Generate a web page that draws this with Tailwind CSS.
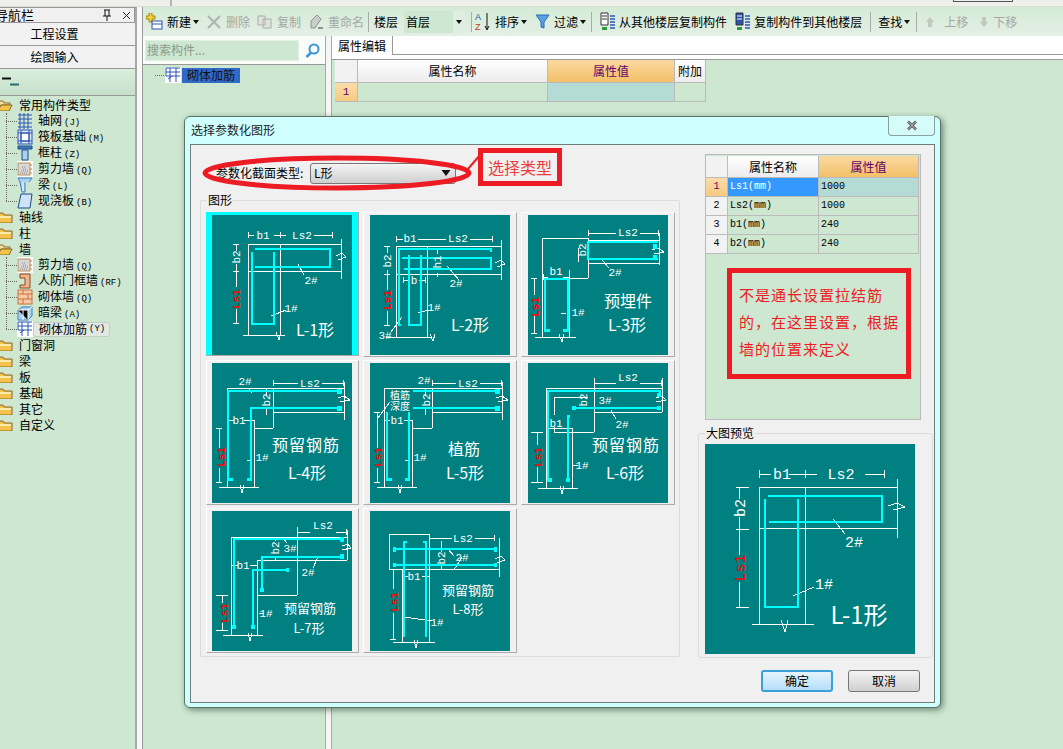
<!doctype html>
<html lang="zh"><head><meta charset="utf-8"><script src="https://cdn.jsdelivr.net/npm/@tailwindcss/browser@4"></script></head>
<body class="bg-[#cde7d0]">
<svg width="0" height="0" class="absolute">
<defs>
<symbol id="fo" viewBox="0 0 16 12"><path d="M1 2h5l1 2h8v8H1z" fill="#f3c34e" stroke="#8a6a20"/><path d="M2 5h12v2H2z" fill="#fbe9a6"/></symbol>
<symbol id="fopen" viewBox="0 0 16 12"><path d="M1 2h5l1 2h6v2H4l-3 6z" fill="#f6e3a4" stroke="#8a6a20"/><path d="M1 12l3-6h11l-3 6z" fill="#f3c34e" stroke="#8a6a20"/></symbol>
<symbol id="wall" viewBox="0 0 16 16"><rect width="16" height="16" fill="#fff"/><rect x="1" y="2" width="12" height="12" fill="#d8d8d8" stroke="#b98a60"/><path d="M3 12h8M4 10h7M6 8h4M5 6h3" stroke="#888" stroke-dasharray="1 1"/><path d="M14 3v11" stroke="#e07a20" stroke-dasharray="2 2"/></symbol>
<symbol id="rebar" viewBox="0 0 16 16"><rect width="16" height="16" fill="#fff"/><path d="M1 1h14M1 1v8h14M5 1v14M11 1v14M1 5h14M3 12l4-3" fill="none" stroke="#2b55b5"/></symbol>
<symbol id="caret" viewBox="0 0 6 4"><path d="M0 0h6L3 4z" fill="#111"/></symbol>
</defs>
</svg>
<div class="relative w-[1063px] h-[749px] overflow-hidden flex flex-col bg-[#cde7d0] text-black text-[12px] leading-4 font-['Noto_Sans_CJK_SC','Liberation_Sans',sans-serif]">
  <div class="h-[7px] bg-[#efefec] border-b border-[#dcdcd8] flex shrink-0">
    <div class="w-[172px] h-[6px] border-r-2 border-[#b5b5b5]"></div>
    <div class="ml-[781px] w-[60px] h-[2px] border-x border-b border-[#555]"></div>
  </div>
  <div class="flex flex-1 min-h-0">
    <!-- left nav -->
    <div class="w-[137px] shrink-0 flex flex-col border-r-2 border-[#a8a8a8] bg-[#cde7d0]">
      <div class="h-[16px] bg-[#f0f0f0] border border-l-0 border-[#999] flex items-center overflow-hidden">
        <span class="-ml-[5px] text-[13px]">导航栏</span>
        <svg class="ml-auto shrink-0" width="12" height="12" viewBox="0 0 12 12"><path d="M3 1h6M4 1v6M8 1v6M2 7h8M6 7v5" stroke="#111" fill="none"/></svg>
        <svg class="ml-[9px] mr-[3px] shrink-0" width="9" height="9" viewBox="0 0 9 9"><path d="M1 1l7 7M8 1L1 8" stroke="#222" fill="none"/></svg>
      </div>
      <div class="h-[23px] bg-[#f2f2f2] border-b border-[#999] flex items-center justify-center pr-[26px] text-[12px]">工程设置</div>
      <div class="h-[23px] bg-[#f2f2f2] border-b border-[#999] flex items-center justify-center pr-[26px] text-[12px]">绘图输入</div>
      <div class="h-[27px] bg-gradient-to-b from-[#dbeedd] to-[#c6e0ca] border-b border-[#999] relative flex items-center pl-[2px]">
        <svg width="18" height="10" viewBox="0 0 18 10"><path d="M0 1.5h9" stroke="#111" stroke-width="2"/><path d="M8 7.5h9" stroke="#1f6f70" stroke-width="2"/></svg>
      </div>
      <div class="pt-[1px] relative">
        <div class="flex items-center h-4 overflow-visible"><svg class="-ml-[3px] shrink-0" width="16" height="12"><use href="#fopen"/></svg><span class="ml-[6px]">常用构件类型</span></div>
        <div class="relative">
          <div class="absolute left-[6px] top-0 h-[88px] border-l border-dotted border-[#666]"></div>
          <div class="flex items-center h-4 pl-[6px]"><span class="w-[11px] border-t border-dotted border-[#666]"></span><svg width="16" height="16" viewBox="0 0 16 16"><path d="M1 2h14M1 6h14M1 10h14M1 14h14M3 0v16M7 0v16M11 0v16" stroke="#2b55b5" fill="none"/></svg><span class="ml-[5px]">轴网<span class="font-['Liberation_Mono'] text-[9px] ml-[2px]">(J)</span></span></div>
          <div class="flex items-center h-4 pl-[6px]"><span class="w-[11px] border-t border-dotted border-[#666]"></span><svg width="16" height="16" viewBox="0 0 16 16"><rect x="1" y="1" width="14" height="14" fill="#dfe9f5" stroke="#2b55b5"/><rect x="4" y="4" width="8" height="8" fill="#fff" stroke="#2b55b5"/><path d="M1 4h14M1 12h14M4 1v14M12 1v14" stroke="#2b55b5"/></svg><span class="ml-[5px]">筏板基础<span class="font-['Liberation_Mono'] text-[9px] ml-[2px]">(M)</span></span></div>
          <div class="flex items-center h-4 pl-[6px]"><span class="w-[11px] border-t border-dotted border-[#666]"></span><svg width="16" height="16" viewBox="0 0 16 16"><path d="M1 1h14v3H1z" fill="#3f7fc0" stroke="#1d4a8a"/><path d="M5 5h6v10H5z" fill="#a8d2ee" stroke="#1d4a8a"/></svg><span class="ml-[5px]">框柱<span class="font-['Liberation_Mono'] text-[9px] ml-[2px]">(Z)</span></span></div>
          <div class="flex items-center h-4 pl-[6px]"><span class="w-[11px] border-t border-dotted border-[#666]"></span><svg width="16" height="16"><use href="#wall"/></svg><span class="ml-[5px]">剪力墙<span class="font-['Liberation_Mono'] text-[9px] ml-[2px]">(Q)</span></span></div>
          <div class="flex items-center h-4 pl-[6px]"><span class="w-[11px] border-t border-dotted border-[#666]"></span><svg width="16" height="16" viewBox="0 0 16 16"><path d="M1 1h14l-3 4H8v10H5L3 5z" fill="#a8d2ee" stroke="#3f7fc0"/><path d="M8 5l4 0M6 5v9" stroke="#fff"/></svg><span class="ml-[5px]">梁<span class="font-['Liberation_Mono'] text-[9px] ml-[2px]">(L)</span></span></div>
          <div class="flex items-center h-4 pl-[6px]"><span class="w-[11px] border-t border-dotted border-[#666]"></span><svg width="16" height="16" viewBox="0 0 16 16"><path d="M4 1h11l-2 14H1z" fill="#cfe3f7" stroke="#1d4a8a"/></svg><span class="ml-[5px]">现浇板<span class="font-['Liberation_Mono'] text-[9px] ml-[2px]">(B)</span></span></div>
        </div>
        <div class="flex items-center h-4"><svg class="-ml-[3px] shrink-0" width="16" height="12"><use href="#fo"/></svg><span class="ml-[6px]">轴线</span></div>
        <div class="flex items-center h-4"><svg class="-ml-[3px] shrink-0" width="16" height="12"><use href="#fo"/></svg><span class="ml-[6px]">柱</span></div>
        <div class="flex items-center h-4"><svg class="-ml-[3px] shrink-0" width="16" height="12"><use href="#fopen"/></svg><span class="ml-[6px]">墙</span></div>
        <div class="relative">
          <div class="absolute left-[6px] top-0 h-[72px] border-l border-dotted border-[#666]"></div>
          <div class="flex items-center h-4 pl-[6px]"><span class="w-[11px] border-t border-dotted border-[#666]"></span><svg width="16" height="16"><use href="#wall"/></svg><span class="ml-[5px]">剪力墙<span class="font-['Liberation_Mono'] text-[9px] ml-[2px]">(Q)</span></span></div>
          <div class="flex items-center h-4 pl-[6px]"><span class="w-[11px] border-t border-dotted border-[#666]"></span><svg width="16" height="16" viewBox="0 0 16 16"><path d="M3 1h10v14H3v-3h5V5H3z" fill="#f2b48c" stroke="#8a4a20"/></svg><span class="ml-[5px]">人防门框墙<span class="font-['Liberation_Mono'] text-[9px] ml-[2px]">(RF)</span></span></div>
          <div class="flex items-center h-4 pl-[6px]"><span class="w-[11px] border-t border-dotted border-[#666]"></span><svg width="16" height="16" viewBox="0 0 16 16"><rect x="1" y="1" width="14" height="14" fill="#f8c9a6" stroke="#c8703a"/><path d="M1 5h14M1 10h14M6 1v4M11 5v5M6 10v5" stroke="#c8703a"/></svg><span class="ml-[5px]">砌体墙<span class="font-['Liberation_Mono'] text-[9px] ml-[2px]">(Q)</span></span></div>
          <div class="flex items-center h-4 pl-[6px]"><span class="w-[11px] border-t border-dotted border-[#666]"></span><svg width="16" height="16" viewBox="0 0 16 16"><path d="M1 5l4-3h10v9l-4 4H1z" fill="#a8d2ee" stroke="#3f7fc0"/><path d="M1 5h10v10M11 5l4-3M6 5v10" stroke="#fff"/></svg><span class="ml-[5px]">暗梁<span class="font-['Liberation_Mono'] text-[9px] ml-[2px]">(A)</span></span></div>
          <div class="flex items-center h-4 pl-[6px]"><span class="w-[11px] border-t border-dotted border-[#666]"></span><svg width="16" height="16"><use href="#rebar"/></svg><span class="pl-[5px] pr-[4px] h-[15px] flex items-center bg-[#e3e8e3] border border-[#c4cfc4] rounded-[3px]">砌体加筋<span class="font-['Liberation_Mono'] text-[9px] ml-[2px]">(Y)</span></span></div>
        </div>
        <div class="flex items-center h-4"><svg class="-ml-[3px] shrink-0" width="16" height="12"><use href="#fo"/></svg><span class="ml-[6px]">门窗洞</span></div>
        <div class="flex items-center h-4"><svg class="-ml-[3px] shrink-0" width="16" height="12"><use href="#fo"/></svg><span class="ml-[6px]">梁</span></div>
        <div class="flex items-center h-4"><svg class="-ml-[3px] shrink-0" width="16" height="12"><use href="#fo"/></svg><span class="ml-[6px]">板</span></div>
        <div class="flex items-center h-4"><svg class="-ml-[3px] shrink-0" width="16" height="12"><use href="#fo"/></svg><span class="ml-[6px]">基础</span></div>
        <div class="flex items-center h-4"><svg class="-ml-[3px] shrink-0" width="16" height="12"><use href="#fo"/></svg><span class="ml-[6px]">其它</span></div>
        <div class="flex items-center h-4"><svg class="-ml-[3px] shrink-0" width="16" height="12"><use href="#fo"/></svg><span class="ml-[6px]">自定义</span></div>
      </div>
    </div>
    <div class="w-[6px] shrink-0 bg-[#f8f8f8] border-r border-[#999]"></div>
    <!-- main -->
    <div class="flex-1 min-w-0 flex flex-col">
      <div class="h-[29px] shrink-0 bg-gradient-to-b from-[#d4ebd7] to-[#e4efe5] flex items-center pl-[3px] whitespace-nowrap">
        <svg class="shrink-0" width="17" height="17" viewBox="0 0 17 17"><path d="M3 0h3v3h3v3H6v3H3V6H0V3h3z" fill="#f4d23c" stroke="#a08a10"/><rect x="6" y="8" width="10" height="8" fill="#fff" stroke="#2b55b5"/><path d="M6 11h10" stroke="#2b55b5"/></svg>
        <span class="ml-[4px]">新建</span><svg class="ml-[2px] shrink-0" width="6" height="4"><use href="#caret"/></svg>
        <svg class="ml-[8px] shrink-0" width="14" height="14" viewBox="0 0 14 14"><path d="M1 1l12 12M13 1L1 13" stroke="#aeb5ae" stroke-width="2"/></svg>
        <span class="ml-[5px] text-[#a2a8a2]">删除</span>
        <svg class="ml-[7px] shrink-0" width="15" height="14" viewBox="0 0 15 14"><path d="M1 1h7v9H1zM6 4h8v9H6z" fill="#dfe4df" stroke="#a8aea8"/></svg>
        <span class="ml-[5px] text-[#a2a8a2]">复制</span>
        <svg class="ml-[9px] shrink-0" width="14" height="15" viewBox="0 0 14 15"><path d="M1 14V7l6-6 4 4-6 9z" fill="#c8cfc8" stroke="#8c948c"/><path d="M8 14h5" stroke="#8c948c" stroke-width="2"/></svg>
        <span class="ml-[4px] text-[#a2a8a2]">重命名</span>
        <span class="ml-[4px] h-[20px] border-l border-[#aaa]"></span>
        <span class="ml-[5px]">楼层</span>
        <div class="ml-[6px] w-[61px] h-[22px] bg-[#cde7d0] flex items-center pl-[2px] relative"><span>首层</span><span class="absolute right-0 top-0 w-[12px] h-[22px] bg-[#dfeee0] flex items-center justify-center"><svg width="6" height="4"><use href="#caret"/></svg></span></div>
        <span class="ml-[6px] h-[20px] border-l border-[#aaa]"></span>
        <svg class="ml-[3px] shrink-0" width="16" height="20" viewBox="0 0 16 20"><text x="0" y="8" font-size="9" fill="#2b55b5" font-family="Liberation Sans">A</text><text x="0" y="18" font-size="9" fill="#c0392b" font-family="Liberation Sans">Z</text><path d="M12 1v16M10 14l2 4 2-4" stroke="#111" fill="none"/></svg>
        <span class="ml-[4px]">排序</span><svg class="ml-[2px] shrink-0" width="6" height="4"><use href="#caret"/></svg>
        <svg class="ml-[8px] shrink-0" width="15" height="15" viewBox="0 0 15 15"><path d="M1 1h13L9 8v6l-3-1V8z" fill="#5aa0de" stroke="#2b6cb0"/></svg>
        <span class="ml-[4px]">过滤</span><svg class="ml-[2px] shrink-0" width="6" height="4"><use href="#caret"/></svg>
        <span class="ml-[5px] h-[20px] border-l border-[#aaa]"></span>
        <svg class="ml-[8px] shrink-0" width="16" height="19" viewBox="0 0 16 19"><path d="M1 1h7v12H1z" fill="#fff" stroke="#333"/><path d="M2 4h5M2 7h5" stroke="#333"/><path d="M10 4h5M10 7h5M10 10h5M10 13h5M10 16h5" stroke="#2b55b5" stroke-width="1.5"/><path d="M2 15h5v3H2z" fill="#2a9a3c"/></svg>
        <span class="ml-[3px]">从其他楼层复制构件</span>
        <svg class="ml-[8px] shrink-0" width="16" height="19" viewBox="0 0 16 19"><path d="M1 1h7v12H1z" fill="#2b55b5" stroke="#333"/><path d="M2 4h5M2 7h5" stroke="#fff"/><path d="M10 4h5M10 7h5M10 10h5M10 13h5M10 16h5" stroke="#2b55b5" stroke-width="1.5"/><path d="M2 15h5v3H2z" fill="#2a9a3c"/></svg>
        <span class="ml-[3px]">复制构件到其他楼层</span>
        <span class="ml-[8px] h-[20px] border-l border-[#aaa]"></span>
        <span class="ml-[7px]">查找</span><svg class="ml-[2px] shrink-0" width="6" height="4"><use href="#caret"/></svg>
        <span class="ml-[6px] h-[20px] border-l border-[#aaa]"></span>
        <svg class="ml-[8px] shrink-0" width="10" height="12" viewBox="0 0 10 12"><path d="M5 1l4 5H7v5H3V6H1z" fill="#c2c8c2"/></svg>
        <span class="ml-[9px] text-[#a2a8a2]">上移</span>
        <svg class="ml-[11px] shrink-0" width="10" height="12" viewBox="0 0 10 12"><path d="M5 11L1 6h2V1h4v5h2z" fill="#c2c8c2"/></svg>
        <span class="ml-[4px] text-[#a2a8a2]">下移</span>
      </div>
      <div class="flex-1 min-h-0 flex">
        <div class="w-[182px] shrink-0 flex flex-col">
          <div class="h-[29px] bg-[#fafcfa] flex items-center pl-[2px] border-b border-[#999]">
            <div class="w-[154px] h-[21px] bg-[#cde7d0] border border-[#e2f0e2] text-[#8c9a8c] flex items-center pl-[1px] text-[12px]">搜索构件...</div>
            <svg class="ml-[6px]" width="15" height="15" viewBox="0 0 15 15"><circle cx="9" cy="6" r="4.5" fill="#fff" stroke="#3a96d8" stroke-width="2"/><path d="M6 9.5L1.5 14" stroke="#3a96d8" stroke-width="2.5"/></svg>
          </div>
          <div class="flex-1 pt-[2px] pl-[12px] bg-[#cde7d0]">
            <div class="flex items-center h-4"><span class="w-[9px] border-t border-dotted border-[#666]"></span><svg width="18" height="16"><use href="#rebar"/></svg><span class="bg-[#3169c6] text-[#111] px-[5px] h-[15px] flex items-center text-[12px]">砌体加筋</span></div>
          </div>
        </div>
        <div class="w-[7px] shrink-0 bg-[#f6f6f6] border-x border-[#a8a8a8]"></div>
        <div class="flex-1 min-w-0 flex flex-col">
          <div class="h-[19px] bg-white border-b border-[#999] flex shrink-0"><div class="w-[61px] -mb-px border-r border-[#999] bg-white flex items-center justify-center">属性编辑</div></div>
          <div class="h-[5px] bg-white border-b border-[#999] shrink-0"></div>
          <div class="grid grid-cols-[23px_190px_127px_31px] grid-rows-[23px_19px] w-[371px] ml-[3px] text-center">
            <div class="bg-[#f2f2f2] border-r border-b border-[#bbb]"></div>
            <div class="bg-gradient-to-b from-white to-[#ececec] border-r border-b border-[#bbb] leading-[22px]">属性名称</div>
            <div class="bg-gradient-to-b from-[#fad9a0] to-[#f2c066] border-r border-b border-[#bbb] leading-[22px] text-[#660066]">属性值</div>
            <div class="bg-gradient-to-b from-white to-[#ececec] border-r border-b border-[#bbb] leading-[22px]">附加</div>
            <div class="bg-gradient-to-b from-[#fbdca8] to-[#f6ca80] border-r border-b border-[#bbb] text-[#660066] font-['Liberation_Mono'] text-[11px] leading-[18px]">1</div>
            <div class="border-r border-b border-[#bbb]"></div>
            <div class="bg-[#b5dbd6] border-r border-b border-[#bbb]"></div>
            <div class="border-r border-b border-[#bbb]"></div>
          </div>
        </div>
      </div>
    </div>
  </div>

  <!-- dialog -->
  <div class="absolute left-[184px] top-[116px] w-[757px] h-[592px] bg-[#d0ffff] rounded-[6px] border border-[#5c7268] shadow-[2px_2px_6px_rgba(40,70,50,0.6)] flex flex-col">
    <div class="h-[27px] shrink-0 flex relative">
      <span class="ml-[6px] mt-[5px] text-[12px] text-[#222]">选择参数化图形</span>
      <div class="absolute left-[703px] -top-px w-[47px] h-[20px] border border-t-0 border-[#8aa09a] rounded-b-[4px] bg-[#d6fbfb] flex items-center justify-center">
        <svg width="12" height="11" viewBox="0 0 12 11"><path d="M2 1.5l8 8M10 1.5l-8 8" stroke="#555" stroke-width="2.5"/><path d="M2 1.5l8 8M10 1.5l-8 8" stroke="#ddd" stroke-width="0.8"/></svg>
      </div>
    </div>
    <div class="ml-[5px] w-[745px] h-[559px] bg-[#f0f0f0] border border-[#6f7f78] flex relative">
      <!-- left column -->
      <div class="w-[507px] shrink-0 flex flex-col pl-[9px]">
        <div class="h-[40px] flex items-center pl-[16px] pt-[16px]">
          <span class="w-[94px]">参数化截面类型:</span>
          <div class="w-[146px] h-[21px] border border-[#777] rounded-[3px] bg-gradient-to-b from-[#f4f4f4] to-[#cfcfcf] flex items-center pl-[3px] relative"><span>L形</span><span class="absolute right-[4px] top-[6px]"><svg class="block" width="10" height="6"><use href="#caret"/></svg></span></div>
        </div>
        <div class="relative mt-[15px] w-[480px] h-[457px] border border-[#dcdcdc] rounded-[2px] pl-[5px] pt-[11px]">
          <span class="absolute left-[6px] -top-[9px] bg-[#f0f0f0] px-px leading-4">图形</span>
          <div class="grid grid-cols-[157px_158px_154px] grid-rows-[148px_148px_148px]">
            <!-- L-1 -->
            <div class="w-[153px] h-[144px] bg-[#00ffff] pl-[6px] pt-[3px] border-r border-b border-[#aaa]">
              <svg width="140" height="140" viewBox="0 0 140 140" class="bg-[#008080] block"><g stroke="#fff" fill="none" shape-rendering="crispEdges"><path d="M36 29H129M36 29V120M68 29V120M36 56H129M31 120H73M129 24V64M36 17V23M36 20H42M62 20H74M68 17V23M102 20H120M120 17V23M21 29H27M24 29V36M24 49V72M24 94V108M21 108H27M21 56H27"/><path d="M124 41L130 38L134 42L126 45" /><path d="M64 117L67 125L69 117" /><path d="M86 49L92 60M59 101L74 95"/></g><g fill="none" stroke="#0ff" stroke-width="2" shape-rendering="crispEdges"><path d="M43 34H118V52H43M40 37V109H62V37"/></g><g fill="#fff" font-family="Liberation Mono" font-size="11" text-anchor="middle"><text x="51" y="24">b1</text><text x="90" y="24">Ls2</text><text transform="translate(28,42) rotate(-90)">b2</text><text x="99" y="69">2#</text><text x="79" y="97">1#</text><text fill="#f00" font-weight="bold" transform="translate(28,84) rotate(-90)">Ls1</text><text x="103" y="121" font-size="16" font-family="Noto Sans CJK SC">L-1形</text></g></svg>
            </div>
            <!-- L-2 -->
            <div class="w-[154px] h-[145px] pl-[7px] pt-[3px] border-r border-b border-t border-l border-t-white border-l-white border-[#aaa]">
              <svg width="140" height="140" viewBox="0 0 140 140" class="bg-[#008080] block -ml-px -mt-px"><g stroke="#fff" fill="none" shape-rendering="crispEdges"><path d="M26 31H131M26 31V122M57 31V122M26 59H131M16 122H62M131 25V65M26 21V27M26 24H33M48 24H76M100 24H122M122 21V27M14 31H20M17 31V38M17 55V75M17 96V110M14 110H20M14 59H20M33 62V68M33 65H39M49 65H55M55 62V68M67 34V39M67 58V62"/><path d="M125 48L131 45L135 49L127 52M77 51L89 65M48 98L59 95M32 102L21 117M60 119L63 126L65 119"/></g><g fill="none" stroke="#0ff" stroke-width="2" shape-rendering="crispEdges"><path d="M31 110H29V34H121V37M32 43H121V54H34M39 40V110H51V40"/></g><g fill="#fff" font-family="Liberation Mono" font-size="11" text-anchor="middle"><text x="40" y="27">b1</text><text x="88" y="27">Ls2</text><text x="44" y="69">b</text><text transform="translate(21,46) rotate(-90)">b2</text><text transform="translate(71,47) rotate(-90)">h1</text><text x="86" y="72">2#</text><text x="64" y="96">1#</text><text x="15" y="124">3#</text><text fill="#f00" font-weight="bold" transform="translate(21,85) rotate(-90)">Ls1</text><text x="100" y="116" font-size="16" font-family="Noto Sans CJK SC">L-2形</text></g></svg>
            </div>
            <!-- L-3 -->
            <div class="w-[154px] h-[145px] pl-[7px] pt-[3px] border-r border-b border-t border-l border-t-white border-l-white border-[#aaa]">
              <svg width="140" height="140" viewBox="0 0 140 140" class="bg-[#008080] block -ml-px -mt-px"><g stroke="#fff" fill="none" shape-rendering="crispEdges"><path d="M14 23H60M14 23V122M60 23V63M41 63H60M41 55V122M7 122H48M60 25H131M60 48H131M131 18V50M60 15V21M60 18H88M112 18H130M130 15V21M15 59V65M15 62H20M35 62H41M6 63V80M6 100V118M3 63H9M3 118H9M50 33V47"/><path d="M124 35L130 33L136 37L126 39M74 45L81 53M33 98H38M31 119L34 127L36 119"/></g><g fill="none" stroke="#0ff" stroke-width="2" shape-rendering="crispEdges"><path d="M130 27H60V44H130M17 117V64H40V117"/></g><path d="M125 29h4v5h-4zM125 40h4v5h-4zM17 114h5v3h-5zM35 114h5v3h-5z" fill="#0ff"/><g fill="#fff" font-family="Liberation Mono" font-size="11" text-anchor="middle"><text x="28" y="60">b1</text><text x="100" y="21">Ls2</text><text transform="translate(58,35) rotate(-90)">b2</text><text x="87" y="61">2#</text><text x="50" y="101">1#</text><text fill="#f00" font-weight="bold" transform="translate(11,92) rotate(-90)">Ls1</text><g font-family="Noto Sans CJK SC" font-size="16"><text x="100" y="92">预埋件</text><text x="99" y="116">L-3形</text></g></g></svg>
            </div>
            <!-- L-4 -->
            <div class="w-[153px] h-[145px] pl-[6px] pt-[3px] border-r border-b border-t border-l border-t-white border-l-white border-[#aaa]">
              <svg width="140" height="140" viewBox="0 0 140 140" class="bg-[#008080] block -ml-px -mt-px"><g stroke="#fff" fill="none" shape-rendering="crispEdges"><path d="M15 25H132M15 25V124M61 25V65M42 65H61M42 57V124M7 124H47M61 49H132M132 19V57M61 17V23M61 20H86M110 20H131M131 17V23M15 57H22M32 57H42M7 65V85M7 105V119M4 65H10M4 119H10M54 26V33M54 46V52"/><path d="M36 25L40 30M35 97H40M126 35L132 33L138 37L128 39M28 122L30 130L32 122"/></g><g fill="none" stroke="#0ff" stroke-width="2" shape-rendering="crispEdges"><path d="M130 28H16V118M130 45H39V118"/></g><path d="M125 26h5v5h-5zM125 43h5v5h-5zM16 115h5v3h-5zM35 115h5v3h-5z" fill="#0ff"/><g fill="#fff" font-family="Liberation Mono" font-size="11" text-anchor="middle"><text x="33" y="22">2#</text><text x="27" y="61">b1</text><text x="98" y="24">Ls2</text><text transform="translate(58,37) rotate(-90)">b2</text><text x="50" y="98">1#</text><text fill="#f00" font-weight="bold" transform="translate(13,94) rotate(-90)">Ls1</text><g font-family="Noto Sans CJK SC" font-size="16"><text x="94" y="88" letter-spacing="1">预留钢筋</text><text x="95" y="116">L-4形</text></g></g></svg>
            </div>
            <!-- L-5 -->
            <div class="w-[154px] h-[145px] pl-[7px] pt-[3px] border-r border-b border-t border-l border-t-white border-l-white border-[#aaa]">
              <svg width="140" height="140" viewBox="0 0 140 140" class="bg-[#008080] block -ml-px -mt-px"><g stroke="#fff" fill="none" shape-rendering="crispEdges"><path d="M14 25H132M14 25V124M62 25V65M42 65H62M42 57V124M7 124H47M62 49H132M132 19V57M62 17V23M62 20H86M110 20H131M131 17V23M14 57H20M34 57H42M7 49V85M7 105V119M4 119H10M4 49H10M55 26V33M55 46V52"/><path d="M8 55L20 39M35 97H40M126 35L132 33L138 37L128 39M28 122L30 130L32 122"/></g><g fill="none" stroke="#0ff" stroke-width="2" shape-rendering="crispEdges"><path d="M43 28H130M43 45H130M17 49V118M39 49V118"/></g><path d="M125 26h5v5h-5zM125 43h5v5h-5zM17 115h5v3h-5zM35 115h5v3h-5z" fill="#0ff"/><g fill="#fff" font-family="Liberation Mono" font-size="11" text-anchor="middle"><text x="54" y="21">2#</text><text x="27" y="61">b1</text><text x="98" y="24">Ls2</text><text transform="translate(60,37) rotate(-90)">b2</text><text x="50" y="98">1#</text><text fill="#f00" font-weight="bold" transform="translate(12,94) rotate(-90)">Ls1</text><g font-family="Noto Sans CJK SC" font-size="10"><text x="30" y="36">植筋</text><text x="30" y="47">深度</text></g><g font-family="Noto Sans CJK SC" font-size="16"><text x="94" y="92">植筋</text><text x="95" y="116">L-5形</text></g></g></svg>
            </div>
            <!-- L-6 -->
            <div class="w-[154px] h-[145px] pl-[7px] pt-[3px] border-r border-b border-t border-l border-t-white border-l-white border-[#aaa]">
              <svg width="140" height="140" viewBox="0 0 140 140" class="bg-[#008080] block -ml-px -mt-px"><g stroke="#fff" fill="none" shape-rendering="crispEdges"><path d="M18 25H134M18 25V125M134 15V49M66 49H134M66 15V69M26 69H66M26 34V52M26 64V69M26 34H60M44 65V125M18 65H44M10 125H50M66 20H88M112 20H133M133 17V23M9 69V82M9 104V119M3 69H15M3 119H15"/><path d="M50 102H45M128 35L134 33L138 37L128 39M32 123L34 131L36 123M83 47L88 56"/></g><g fill="none" stroke="#0ff" stroke-width="2" shape-rendering="crispEdges"><path d="M20 119V28H132V32M46 45H132M40 53V119"/></g><path d="M129 30h4v4h-4zM129 43h4v4h-4zM44 43h4v4h-4zM39 52h3v3h-3zM20 115h4v4h-4zM38 115h4v4h-4z" fill="#0ff"/><g fill="#fff" font-family="Liberation Mono" font-size="11" text-anchor="middle"><text x="100" y="18">Ls2</text><text transform="translate(59,37) rotate(-90)">b2</text><text x="77" y="41">3#</text><text x="94" y="65">2#</text><text x="28" y="64">b1</text><text x="54" y="106">1#</text><text fill="#f00" font-weight="bold" transform="translate(14,94) rotate(-90)">Ls1</text><g font-family="Noto Sans CJK SC" font-size="16"><text x="98" y="88" letter-spacing="1">预留钢筋</text><text x="97" y="116">L-6形</text></g></g></svg>
            </div>
            <!-- L-7 -->
            <div class="w-[153px] h-[145px] pl-[6px] pt-[3px] border-r border-b border-t border-l border-t-white border-l-white border-[#aaa]">
              <svg width="140" height="140" viewBox="0 0 140 140" class="bg-[#008080] block -ml-px -mt-px"><g stroke="#fff" fill="none" shape-rendering="crispEdges"><path d="M19 26H135M19 26V124M135 19V49M85 16V84M85 21H98M124 21H134M134 18V24M45 49H135M45 49V124M45 84H85M11 124H51M19 54H26M38 54H45M10 84V92M10 112V119M4 84H16M4 119H16M63 26V30M63 45V49"/><path d="M106 46L101 57M70 26L75 32M52 102H47M130 35L136 33L139 37L130 39M36 122L38 130L40 122"/></g><g fill="none" stroke="#0ff" stroke-width="2" shape-rendering="crispEdges"><path d="M22 117V28H132M50 79V46H132M41 117V59H76"/></g><path d="M128 26h4v5h-4zM128 43h4v5h-4zM48 77h4v4h-4zM20 114h4v4h-4zM39 114h4v4h-4zM74 57h3v4h-3z" fill="#0ff"/><g fill="#fff" font-family="Liberation Mono" font-size="11" text-anchor="middle"><text x="111" y="18">Ls2</text><text transform="translate(67,37) rotate(-90)">b2</text><text x="78" y="41">3#</text><text x="96" y="65">2#</text><text x="31" y="58">b1</text><text x="54" y="106">1#</text><text fill="#f00" font-weight="bold" transform="translate(16,102) rotate(-90)">Ls1</text><g font-family="Noto Sans CJK SC" font-size="13"><text x="98" y="102">预留钢筋</text><text x="97" y="122">L-7形</text></g></g></svg>
            </div>
            <!-- L-8 -->
            <div class="w-[154px] h-[145px] pl-[7px] pt-[3px] border-r border-b border-t border-l border-t-white border-l-white border-[#aaa]">
              <svg width="140" height="140" viewBox="0 0 140 140" class="bg-[#008080] block -ml-px -mt-px"><g stroke="#fff" fill="none" shape-rendering="crispEdges"><path d="M19 23H59V58H19ZM59 58H129M59 27H82M105 27H124M124 24V30M129 27V66M32 58V131M59 58V131M23 131H65M23 58V78M23 102V128M20 128H26M71 30V41M71 53V58M32 65H38M52 65H59"/><path d="M34 106L62 110M92 46L84 59M78 38L84 45M125 48L131 45L135 49L127 52M44 129L46 137L48 129"/></g><g fill="none" stroke="#0ff" stroke-width="2" shape-rendering="crispEdges"><path d="M23 38H126M23 54H126M34 126V31H37M56 126V31H53"/></g><path d="M124 36h3v5h-3zM124 52h3v4h-3zM23 36h3v5h-3zM23 52h3v4h-3z" fill="#0ff"/><g fill="#fff" font-family="Liberation Mono" font-size="11" text-anchor="middle"><text x="93" y="31">Ls2</text><text transform="translate(75,47) rotate(-90)">b2</text><text x="92" y="50">2#</text><text x="44" y="69">b1</text><text x="67" y="115">1#</text><text fill="#f00" font-weight="bold" transform="translate(28,91) rotate(-90)">Ls1</text><g font-family="Noto Sans CJK SC" font-size="13"><text x="98" y="84">预留钢筋</text><text x="98" y="103">L-8形</text></g></g></svg>
            </div>
          </div>
        </div>
      </div>
      <!-- right column -->
      <div class="flex-1 min-w-0 flex flex-col pt-[9px]">
        <div class="ml-[7px] w-[216px] h-[266px] bg-[#cde7d0] border border-[#bbb] relative">
          <div class="mt-[1px] grid grid-cols-[22px_91px_100px] grid-rows-[22px_19px_19px_19px_19px] text-[10px] leading-[18px] font-['Liberation_Mono','Noto_Sans_CJK_SC']">
            <div class="bg-[#f2f2f2] border-r border-b border-[#bbb]"></div>
            <div class="bg-gradient-to-b from-white to-[#ececec] border-r border-b border-[#bbb] text-center text-[12px] leading-[21px] font-['Noto_Sans_CJK_SC']">属性名称</div>
            <div class="bg-gradient-to-b from-[#fad9a0] to-[#f2c066] border-r border-b border-[#bbb] text-center text-[12px] leading-[21px] text-[#660066] font-['Noto_Sans_CJK_SC']">属性值</div>
            <div class="bg-gradient-to-b from-[#fbdca8] to-[#f6ca80] border-r border-b border-[#bbb] text-center text-[#660066]">1</div>
            <div class="bg-[#3399ff] text-white border-r border-b border-[#bbb] pl-[2px]">Ls1(mm)</div>
            <div class="bg-[#b5dbd6] border-r border-b border-[#bbb] pl-[2px]">1000</div>
            <div class="bg-[#f2f2f2] border-r border-b border-[#bbb] text-center">2</div>
            <div class="border-r border-b border-[#bbb] pl-[2px]">Ls2(mm)</div>
            <div class="border-r border-b border-[#bbb] pl-[2px]">1000</div>
            <div class="bg-[#f2f2f2] border-r border-b border-[#bbb] text-center">3</div>
            <div class="border-r border-b border-[#bbb] pl-[2px]">b1(mm)</div>
            <div class="border-r border-b border-[#bbb] pl-[2px]">240</div>
            <div class="bg-[#f2f2f2] border-r border-b border-[#bbb] text-center">4</div>
            <div class="border-r border-b border-[#bbb] pl-[2px]">b2(mm)</div>
            <div class="border-r border-b border-[#bbb] pl-[2px]">240</div>
          </div>
        </div>
        <div class="relative mt-[13px] w-[235px] h-[225px] border border-[#dcdcdc] rounded-[3px] pl-[6px] pt-[10px]">
          <span class="absolute left-[6px] -top-[9px] bg-[#f0f0f0] px-px leading-4">大图预览</span>
          <svg width="210" height="210" viewBox="0 0 210 210" class="bg-[#008080] block"><g stroke="#fff" fill="none" shape-rendering="crispEdges"><path d="M54 43H192M54 43V180M100 43V180M54 84H192M47 180H109M192 35V94M54 26V34M54 30H66M84 30H112M100 26V34M160 30H179M179 26V34M31 43H44M34 43V55M34 73V111M34 138V163M31 163H44M31 85H44"/><path d="M183 62L192 59L200 63L188 66M76 176L80 188L83 176M128 75L140 90M88 152L109 143"/></g><g fill="none" stroke="#0ff" stroke-width="2" shape-rendering="crispEdges"><path d="M63 52H177V78H64M60 55V163H93V55"/></g><g fill="#fff" font-family="Liberation Mono" font-size="15" text-anchor="middle"><text x="77" y="35">b1</text><text x="136" y="35">Ls2</text><text transform="translate(40,64) rotate(-90)">b2</text><text x="149" y="103">2#</text><text x="119" y="145">1#</text><text fill="#f00" transform="translate(40,124) rotate(-90)">Ls1</text><text x="154" y="180" font-size="24" font-family="Noto Sans CJK SC">L-1形</text></g></svg>
        </div>
        <div class="flex mt-[12px] ml-[63px] gap-[15px]">
          <div class="w-[72px] h-[22px] rounded-[3px] border-2 border-[#3aa0d8] bg-gradient-to-b from-[#e4f4fd] to-[#b4dff7] flex items-center justify-center">确定</div>
          <div class="w-[72px] h-[22px] rounded-[3px] border border-[#777] bg-gradient-to-b from-[#f4f4f4] to-[#cfcfcf] flex items-center justify-center">取消</div>
        </div>
      </div>
      <!-- annotation ellipse over the selector -->
      <svg class="absolute left-[11px] top-[9px]" width="300" height="40" viewBox="0 0 300 40"><ellipse cx="135" cy="19" rx="132" ry="15" fill="none" stroke="#ed1c24" stroke-width="5"/></svg>
    </div>
    <!-- red callouts over the dialog -->
    <svg class="absolute left-[282px] top-[36px]" width="14" height="18" viewBox="0 0 14 18"><path d="M1 16L13 2" stroke="#ed1c24" stroke-width="2"/></svg>
    <div class="absolute left-[293px] top-[31px] w-[84px] h-[38px] border-[5px] border-[#ed1c24] bg-[#f0f0f0] flex items-center justify-center text-[16px] text-[#ed3a3a] whitespace-nowrap">选择类型</div>
    <div class="absolute left-[542px] top-[151px] w-[184px] h-[111px] border-[5px] border-[#ed1c24] pl-[7px] pt-[8px] text-[15px] leading-[27px] tracking-[1px] text-[#ed1c24] whitespace-nowrap">不是通长设置拉结筋<br>的，在这里设置，根据<br>墙的位置来定义</div>
  </div>
</div>
</body></html>
